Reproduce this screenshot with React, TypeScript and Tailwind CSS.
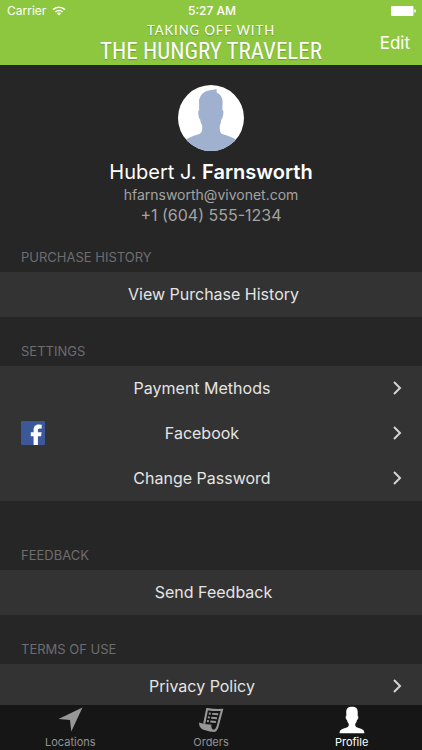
import type { ReactNode } from "react";

function Wifi() {
  return (
    <svg viewBox="0 0 14 10" className="h-[10px] w-[14px]" fill="none" stroke="white" strokeWidth="1.7">
      <path d="M1 3.7a8.6 8.6 0 0 1 12 0" />
      <path d="M3.4 6a5.2 5.2 0 0 1 7.2 0" />
      <path d="M7 9.6 4.9 7.5a3 3 0 0 1 4.2 0z" fill="white" stroke="none" />
    </svg>
  );
}

function Battery() {
  return (
    <svg viewBox="0 0 26 10" className="h-[10px] w-[26px]" fill="white">
      <rect width="22.5" height="10" rx="1" />
      <path d="M23.3 3.2q1.7 .3 1.7 1.8t-1.7 1.8z" />
    </svg>
  );
}

function Avatar() {
  return (
    <svg viewBox="0 0 66 66" className="size-[66px] rounded-full" role="img" aria-label="Profile photo">
      <rect width="66" height="66" fill="#fff" />
      <path
        fill="#9fb1cf"
        d="M38.5 4 L38.8 7.5 Q44.8 10.5 44.6 17 L44.4 25 Q45.8 25 45.3 29 Q44.5 34 43.2 34.5 Q43 38.5 41.8 40.5 Q41.3 46.5 43.5 48.7 Q50.5 50.5 58.5 54.5 L60 66 H5 L7.5 54.5 Q15 50.5 22 48.7 Q24.8 46.5 24.2 40.5 Q22.6 38.5 22.2 34.5 Q21 34 20.3 29 Q20 25.3 21.2 25 L21 15 Q23 6.5 32 5.3 Q36 4.9 38.5 4Z"
      />
    </svg>
  );
}

function Facebook() {
  return (
    <svg viewBox="0 0 24 24" className="size-6" aria-hidden="true">
      <rect width="24" height="24" rx="1" fill="#3b5998" />
      <path
        fill="#fff"
        d="M12.6 24v-8.7H9.8v-4h2.8V8.7C12.6 5.4 14.8 3.6 17.9 3.6q1.6 0 2.8.2v3.6h-2c-1.3 0-1.8.7-1.8 1.8v2.1h3.7l-.5 4h-3.2V24z"
      />
    </svg>
  );
}

function Chevron() {
  return (
    <svg viewBox="0 0 9 14" className="h-[14px] w-[9px]" fill="none" stroke="#d4d4d4" strokeWidth="2" aria-hidden="true">
      <path d="M1 1l6 6-6 6" />
    </svg>
  );
}

function LocationIcon() {
  return (
    <svg viewBox="0 0 25 25" className="size-[25px]" fill="#979797" aria-hidden="true">
      <path d="M24.5 0.5 13.3 24.5 12 13 0.5 12Z" />
    </svg>
  );
}

function OrdersIcon() {
  return (
    <svg viewBox="0 0 26 26" className="size-[26px]" fill="none" stroke="#979797" aria-hidden="true">
      <path strokeWidth="2.1" d="M6.2 16.7 9.1 2.1Q17.5 3.4 24 2.9L19.3 20.4Q17.6 24.8 14.5 23.7" />
      <path
        fill="#979797"
        stroke="none"
        d="M1 15.5Q7.5 17.8 13.4 17.4Q12.7 21.6 15.9 22.9Q14.5 25.2 11.7 24.5L4.7 22.4Q1 20.6 1 15.5Z"
      />
      <path strokeWidth="1.9" d="M10.8 6.5l1.9.2M14.2 6.9l6 .3M9.9 10.3l1.9.3M13.2 10.8l5.8.4M9 14l1.9.3M12.3 14.5l5.6.5" />
    </svg>
  );
}

function ProfileIcon() {
  return (
    <svg viewBox="0 0 26 28" className="h-[28px] w-[26px]" fill="#fff" aria-hidden="true">
      <path d="M13 .7C8.5.5 7 3 7.3 7.3V10q-1 .2-.6 2 .3 1.7 1.3 2 .3 2.4 1.8 4 .3 2.7-1.4 3.3L3.3 23Q.6 24 .5 27.3h25q-.1-3.3-2.8-4.3l-5.1-1.7q-1.7-.6-1.4-3.3 1.5-1.6 1.8-4 1-.3 1.3-2 .4-1.8-.6-2V7.3C19 3 17.5.5 13 .7Z" />
    </svg>
  );
}

function Row({ label, icon, chevron }: { label: string; icon?: ReactNode; chevron?: boolean }) {
  return (
    <button type="button" className="flex h-[45px] w-full items-center bg-[#333333] pr-5 pb-px pl-[21px] text-base text-[#e4e4e4]">
      {chevron && <span className="w-6">{icon}</span>}
      <span className={chevron ? "flex-1 pr-9 pl-[2px]" : "flex-1 pl-1"}>{label}</span>
      {chevron && <Chevron />}
    </button>
  );
}

function Section({ title, children }: { title: string; children: ReactNode }) {
  return (
    <section>
      <h2 className="h-[30px] pl-[21px] text-[13px] leading-[30px] text-[#6d6d70]">{title}</h2>
      {children}
    </section>
  );
}

function Tab({ label, icon, active }: { label: string; icon: ReactNode; active?: boolean }) {
  return (
    <a
      href="#"
      aria-current={active ? "page" : undefined}
      className={`flex flex-1 flex-col items-center ${active ? "text-white" : "text-[#929292]"}`}
    >
      <span className="flex h-8 items-center">{icon}</span>
      <span className="text-[11px] leading-4">{label}</span>
    </a>
  );
}

export default function App() {
  return (
    <div className="flex h-screen flex-col overflow-hidden bg-[#262626] font-['Inter','Liberation_Sans',sans-serif]">
      <header className="h-[65px] shrink-0 bg-[#8dc73f] text-white">
        <div className="grid h-[22px] grid-cols-3 items-center pr-[5px] pl-[7px] text-xs">
          <span className="flex items-center gap-[6px]">
            Carrier <Wifi />
          </span>
          <span className="text-center font-medium">5:27 AM</span>
          <span className="flex justify-end">
            <Battery />
          </span>
        </div>
        <div className="grid h-[43px] grid-cols-[1fr_auto_1fr] px-3">
          <h1 className="col-start-2 flex flex-col items-center font-['Roboto_Condensed','Liberation_Sans_Narrow',sans-serif] [text-shadow:0_1px_1px_#6f9c33]">
            <span className="font-['Lato',sans-serif] text-[13px] leading-4 tracking-[1px]">TAKING OFF WITH</span>
            <span className="text-[23px] leading-7">THE HUNGRY TRAVELER</span>
          </h1>
          <button type="button" className="h-[43px] justify-self-end text-[17px]">
            Edit
          </button>
        </div>
      </header>

      <main className="flex-1 overflow-hidden">
        <div className="flex flex-col items-center pt-5 pb-[17px]">
          <Avatar />
          <p className="mt-2 text-[20px] leading-[26px] text-white">
            Hubert J. <strong className="font-semibold">Farnsworth</strong>
          </p>
          <p className="text-sm leading-5 text-[#a3a3a3]">hfarnsworth@vivonet.com</p>
          <p className="text-base leading-5 text-[#a3a3a3]">+1 (604) 555-1234</p>
        </div>
        <div className="flex flex-col gap-[19px]">
          <Section title="PURCHASE HISTORY">
            <Row label="View Purchase History" />
          </Section>
          <Section title="SETTINGS">
            <Row label="Payment Methods" chevron />
            <Row label="Facebook" icon={<Facebook />} chevron />
            <Row label="Change Password" chevron />
          </Section>
          <div className="pt-5">
            <Section title="FEEDBACK">
              <Row label="Send Feedback" />
            </Section>
          </div>
          <Section title="TERMS OF USE">
            <Row label="Privacy Policy" chevron />
          </Section>
        </div>
      </main>

      <nav className="flex h-[45px] shrink-0 bg-[#161616]">
        <Tab label="Locations" icon={<LocationIcon />} />
        <Tab label="Orders" icon={<OrdersIcon />} />
        <Tab label="Profile" icon={<ProfileIcon />} active />
      </nav>
    </div>
  );
}
